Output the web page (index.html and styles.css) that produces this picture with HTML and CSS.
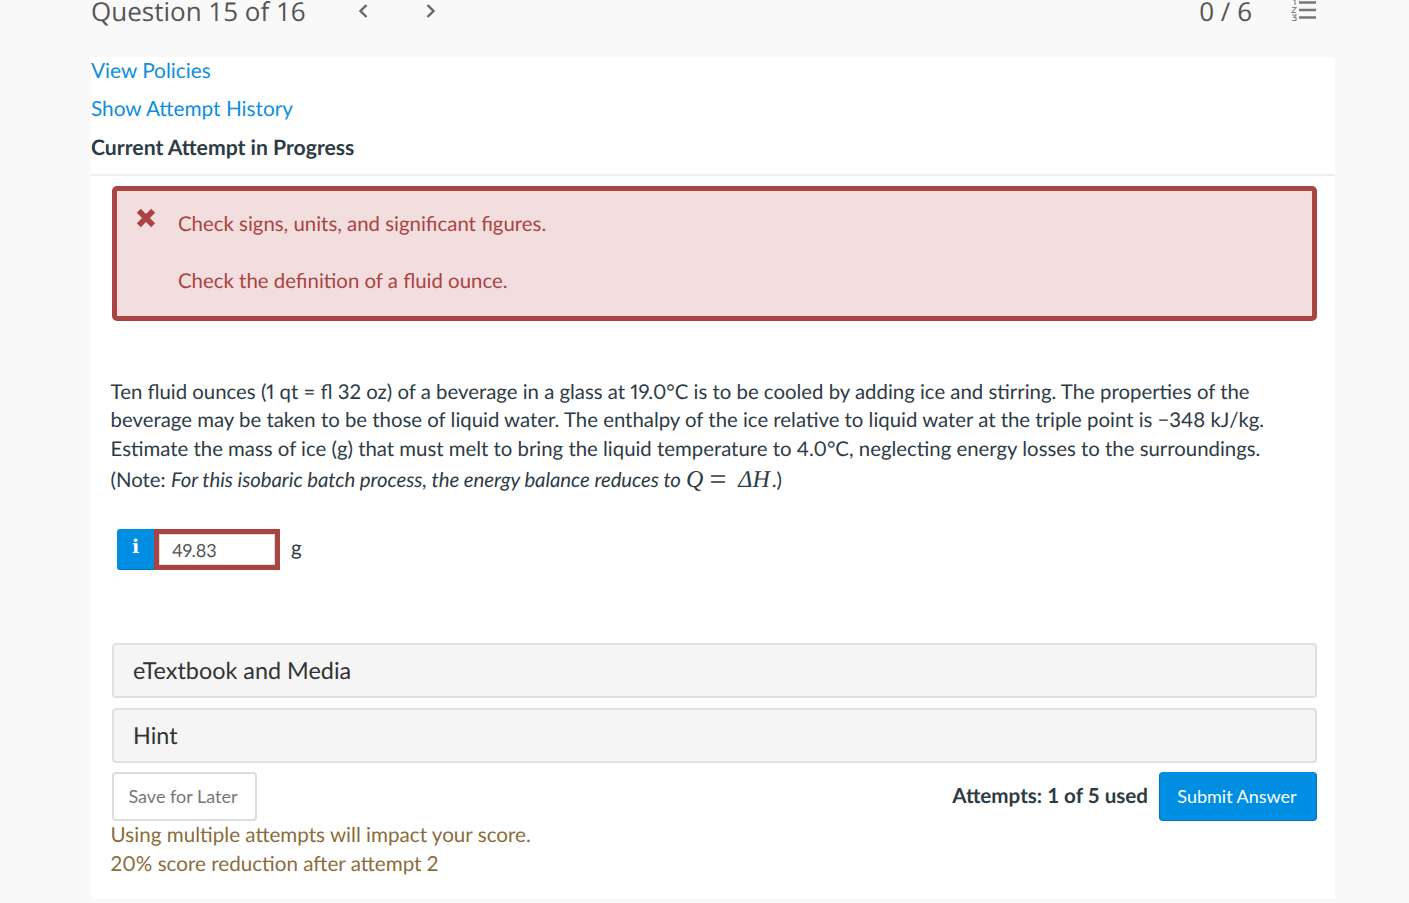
FILE: index.html
```html
<!DOCTYPE html>
<html lang="en">
<head>
<meta charset="utf-8">
<title>Question 15 of 16</title>
<link rel="stylesheet" href="styles.css">
</head>
<body>
<div class="page">
  <header class="topbar">
    <div class="nav-left">
      <span class="q-title">Question 15 of 16</span>
      <svg class="chev chev-prev" width="14" height="18" viewBox="0 0 14 18"><path d="M10.500 3 4.500 9 10.500 15" fill="none" stroke="#666" stroke-width="2.400"/></svg>
      <svg class="chev chev-next" width="14" height="18" viewBox="0 0 14 18"><path d="M3.500 3 9.500 9 3.500 15" fill="none" stroke="#666" stroke-width="2.400"/></svg>
    </div>
    <div class="nav-right">
      <span class="score">0 / 6</span>
      <svg class="list-icon" width="26" height="22" viewBox="0 0 26 22">
        <path d="M8 2.500h17M8 10h17M8 17.500h17" stroke="#777" stroke-width="2.400" fill="none"/>
        <path d="M2 0h2v5M1 7.500h4L1 12.500h4M1 15h4L3 17.500h2v3H1" stroke="#888" stroke-width="1.200" fill="none"/>
      </svg>
    </div>
  </header>
  <main class="panel">
    <a class="link link-policies" href="#">View Policies</a>
    <a class="link link-history" href="#">Show Attempt History</a>
    <h2 class="progress">Current Attempt in Progress</h2>
    <div class="feedback">
      <svg class="x-icon" width="20" height="20" viewBox="0 0 20 20"><path d="M4.800 4.800 15.200 15.200M15.200 4.800 4.800 15.200" stroke="#a94442" stroke-width="5.600" stroke-linecap="square" fill="none"/></svg>
      <div class="feedback-text">
        <p>Check signs, units, and significant figures.</p>
        <p>Check the definition of a fluid ounce.</p>
      </div>
    </div>
    <div class="question">
      <p>Ten fluid ounces (1 qt = fl 32 oz) of a beverage in a glass at 19.0°C is to be cooled by adding ice and stirring. The properties of the beverage may be taken to be those of liquid water. The enthalpy of the ice relative to liquid water at the triple point is −348 kJ/kg. Estimate the mass of ice (g) that must melt to bring the liquid temperature to 4.0°C, neglecting energy losses to the surroundings.</p>
      <p class="note">(Note: <em>For this isobaric batch process, the energy balance reduces to</em> <span class="math"><i>Q</i> <span class="eq">=</span> <i>ΔH</i></span>.)</p>
    </div>
    <div class="answer">
      <span class="info">i</span>
      <span class="input">49.83</span>
      <span class="unit">g</span>
    </div>
    <div class="acc acc-first">eTextbook and Media</div>
    <div class="acc acc-second">Hint</div>
    <div class="actions">
      <button class="btn-save">Save for Later</button>
      <div class="actions-right">
        <span class="attempts">Attempts: 1 of 5 used</span>
        <button class="btn-submit">Submit Answer</button>
      </div>
    </div>
    <p class="warn">Using multiple attempts will impact your score.<br>20% score reduction after attempt 2</p>
  </main>
</div>
</body>
</html>
```
FILE: styles.css
```css
* { box-sizing: border-box; }
html, body { margin: 0; padding: 0; height: 903px; overflow: hidden; background: #f9f9f9; }
body { font-family: Lato, "Liberation Sans", sans-serif; color: #2d3b45; text-rendering: geometricPrecision; font-variant-numeric: proportional-nums; }
.page { width: 1409px; height: 903px; padding: 0 74px 0 91px; }
.topbar { height: 57px; display: flex; justify-content: space-between; padding-right: 18px; }
.nav-left { display: flex; align-items: flex-start; }
.q-title { font-family: "Open Sans", sans-serif; font-size: 26px; line-height: 26px; color: #555; margin-top: -2px; font-variant-numeric: normal; }
.chev { display: block; margin-top: 2px; }
.chev-prev { margin-left: 50px; }
.chev-next { margin-left: 54px; }
.nav-right { display: flex; align-items: flex-start; }
.score { font-family: "Open Sans", sans-serif; font-size: 26px; line-height: 26px; color: #555; margin-top: -2px; margin-left: -1px; font-variant-numeric: normal; }
.list-icon { display: block; margin-left: 39px; }
.panel { background: #fff; height: 842px; display: flow-root; }
.link { display: block; color: #0f8ee0; text-decoration: none; font-size: 20.800px; line-height: 28px; }
.link-history { margin-top: 10px; }
.progress { margin: 10px 0 0; font-size: 21.200px; line-height: 28px; font-weight: 700; height: 43px; color: #2d3b45; border-bottom: 2px solid #eee; }
.feedback { margin: 10px 18px 0 21px; height: 135px; border: 5px solid #a94442; border-radius: 5px; background: #f2dede; display: flex; color: #a94442; }
.x-icon { display: block; margin: 17px 0 0 19px; flex: none; }
.feedback-text { margin-left: 22px; padding-top: 19px; font-size: 20.400px; line-height: 28px; }
.feedback-text p { margin: 0 0 29px; }
.question { margin: 56.600px 18px 0 19.600px; font-size: 20.370px; line-height: 28.500px; }
.question p { margin: 0; }
.question .note { margin-top: 3px; }
.note em { letter-spacing: -0.060px; }
.math { font-family: "Liberation Serif", serif; font-size: 24px; line-height: 0; padding-right: 2px; }
.eq { font-size: 30px; margin: 0 6px 0 0; vertical-align: -2px; }
.answer { display: flex; align-items: flex-start; margin: 34px 0 0 26px; height: 41px; }
.info { width: 37px; height: 41px; background: #008ee2; color: #fff; border-radius: 3px 0 0 3px; border-bottom: 1px solid #0077c2; font-family: "DejaVu Serif", serif; font-weight: 700; font-size: 19px; line-height: 37px; text-align: center; }
.input { width: 126px; height: 41px; border: 5px solid #a94442; background: #fff; font-size: 18px; line-height: 33px; padding-left: 13px; color: #555; box-shadow: inset 0 0 0 1px #ddd; }
.unit { margin-left: 11px; font-size: 20.500px; line-height: 38px; }
.acc { margin: 0 18px 0 21px; height: 55px; background: #f5f5f5; border: 2.500px solid #e0e0e0; border-radius: 4px; padding-left: 19px; font-size: 23.400px; line-height: 51px; color: #333; }
.acc-first { margin-top: 73px; }
.acc-second { margin-top: 10px; }
.actions { margin: 9px 18px 0 21px; display: flex; justify-content: space-between; align-items: flex-start; }
.btn-save { width: 145px; height: 49px; background: #fff; border: 2.500px solid #ddd; border-radius: 4px; font-family: Lato, sans-serif; font-size: 18px; color: #777; padding: 0 3px 0 0; }
.actions-right { display: flex; align-items: center; }
.attempts { font-size: 20.600px; font-weight: 700; margin-right: 11px; font-variant-numeric: normal; }
.btn-submit { width: 158px; height: 49px; background: #008ee2; border: 1px solid #0077c2; border-top-color: #008ee2; border-radius: 4px; font-family: Lato, sans-serif; font-size: 18px; color: #fff; padding: 0 2px 0 0; }
.warn { margin: 0 0 0 19.600px; color: #8a6d3b; font-size: 20.640px; line-height: 29px; }
```
